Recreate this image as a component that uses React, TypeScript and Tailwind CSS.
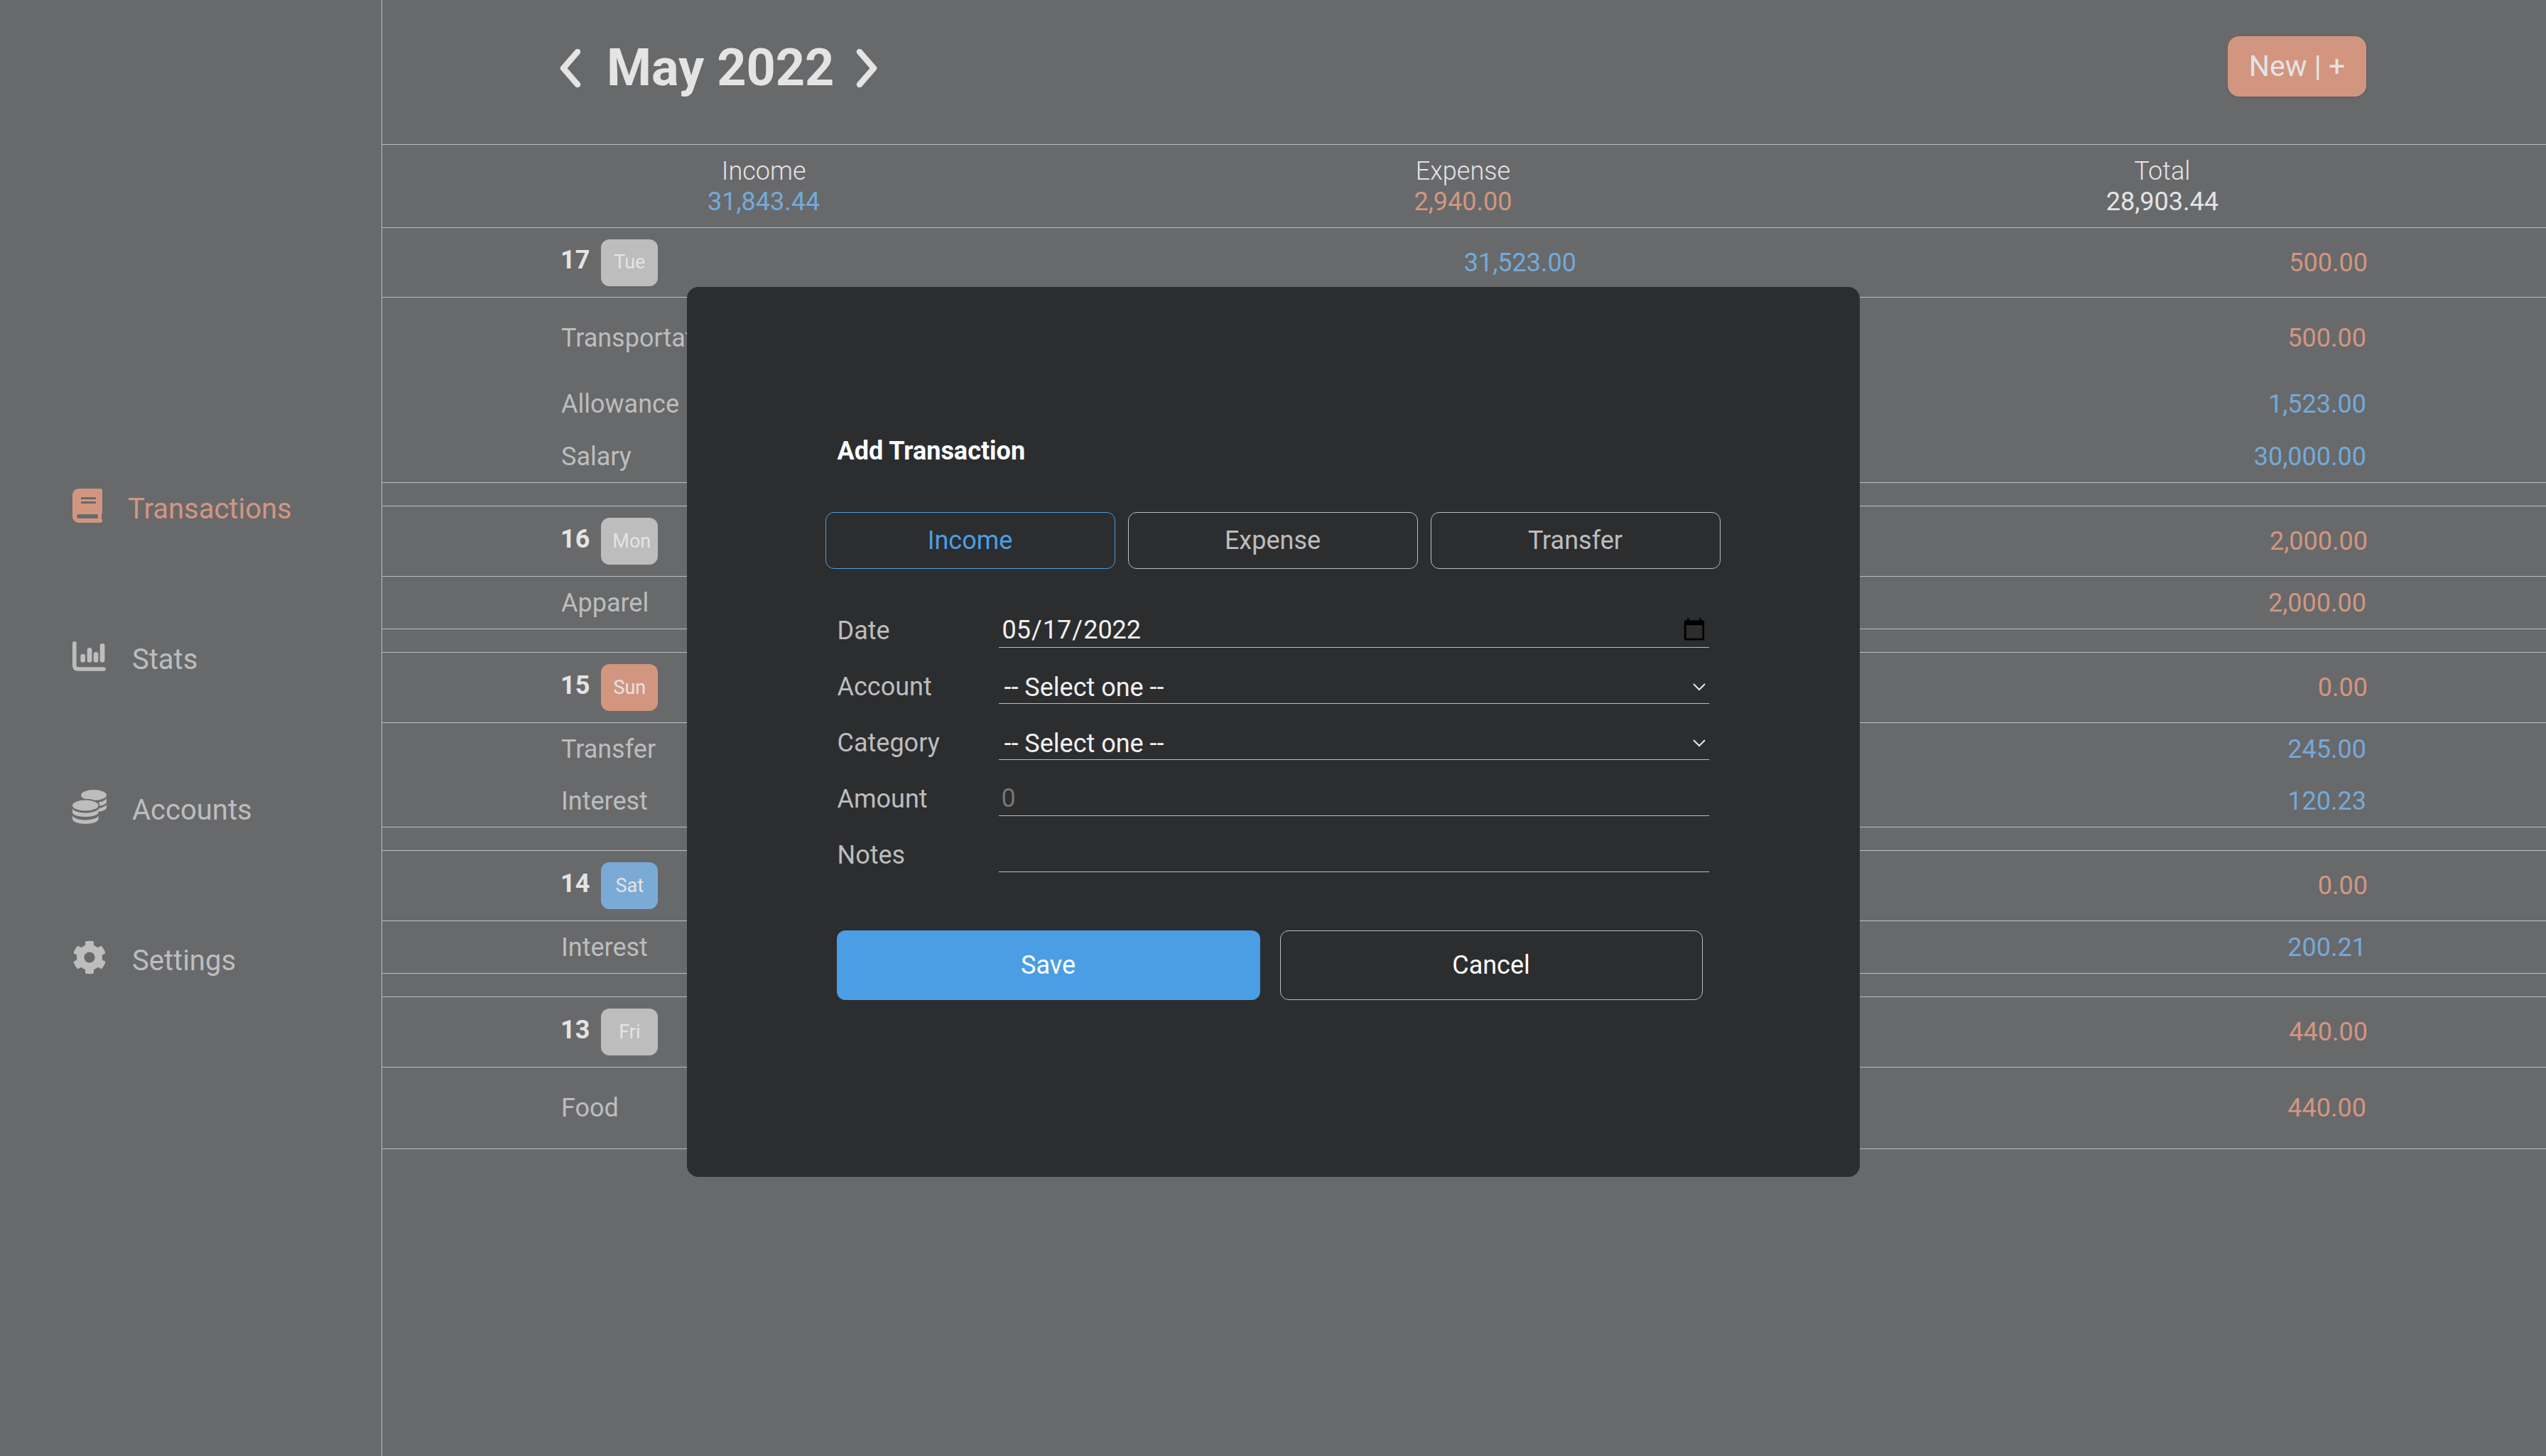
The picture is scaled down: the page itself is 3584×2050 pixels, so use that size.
import React from 'react';
import { FaBook, FaCog } from 'react-icons/fa';

const BLUE = 'text-[#74aad9]';
const RED = 'text-[#d29680]';

type Item = { name: string; amount: string; income?: boolean; height: string };
type Day = {
  date: number;
  weekday: string;
  badge: string;
  income?: string;
  expense: string;
  items: Item[];
};

const DAYS: Day[] = [
  {
    date: 17,
    weekday: 'Tue',
    badge: 'bg-[#bdbdbd]',
    income: '31,523.00',
    expense: '500.00',
    items: [
      { name: 'Transportation', amount: '500.00', height: 'h-[113px]' },
      { name: 'Allowance', amount: '1,523.00', income: true, height: 'h-[74px]' },
      { name: 'Salary', amount: '30,000.00', income: true, height: 'h-[73px]' },
    ],
  },
  {
    date: 16,
    weekday: 'Mon',
    badge: 'bg-[#bdbdbd]',
    expense: '2,000.00',
    items: [{ name: 'Apparel', amount: '2,000.00', height: 'h-[73px]' }],
  },
  {
    date: 15,
    weekday: 'Sun',
    badge: 'bg-[#d29680]',
    expense: '0.00',
    items: [
      { name: 'Transfer', amount: '245.00', income: true, height: 'h-[74px]' },
      { name: 'Interest', amount: '120.23', income: true, height: 'h-[72px]' },
    ],
  },
  {
    date: 14,
    weekday: 'Sat',
    badge: 'bg-[#7caad6]',
    expense: '0.00',
    items: [{ name: 'Interest', amount: '200.21', income: true, height: 'h-[73px]' }],
  },
  {
    date: 13,
    weekday: 'Fri',
    badge: 'bg-[#bdbdbd]',
    expense: '440.00',
    items: [{ name: 'Food', amount: '440.00', height: 'h-[114px]' }],
  },
];

function StatsIcon() {
  return (
    <svg width="48" height="42" viewBox="0 0 48 42" fill="#bdbdbd">
      <path d="M2.8 2.8V34q0 5 5 5H44" fill="none" stroke="#bdbdbd" strokeWidth="5.6" strokeLinecap="round" />
      <rect x="11.3" y="17.7" width="6.7" height="12" rx="3.3" />
      <rect x="20.7" y="9" width="6.7" height="20.7" rx="3.3" />
      <rect x="29.7" y="15" width="6.7" height="14.7" rx="3.3" />
      <rect x="38.7" y="3" width="6.7" height="26.7" rx="3.3" />
    </svg>
  );
}

function CoinsIcon() {
  return (
    <svg width="48" height="48" viewBox="0 0 48 48" fill="#bdbdbd">
      <ellipse cx="30" cy="7.5" rx="18" ry="7.5" />
      <path d="M37 17.5c5-.8 9.5-2.6 11-5.5v5c0 2.8-5 5-11 6z" />
      <path d="M37 26c5-.8 9.5-2.6 11-5.5V25c0 2.8-5 5-11 6z" />
      <ellipse cx="18.3" cy="22" rx="18.3" ry="7.6" stroke="#68696b" strokeWidth="3.4" />
      <ellipse cx="18.3" cy="22" rx="18.3" ry="7.6" />
      <path d="M0 26.5c1.8 3.6 9 6 18.3 6s16.5-2.4 18.3-6V32c0 3.3-8 6-18.3 6S0 35.3 0 32z" />
      <path d="M0 36.5c1.8 3.6 9 6 18.3 6s16.5-2.4 18.3-6V41c0 3.8-8 7-18.3 7S0 44.8 0 41z" />
    </svg>
  );
}

function SelectArrow() {
  return (
    <svg
      className="absolute right-[5px] bottom-[17px] pointer-events-none"
      width="18"
      height="11"
      viewBox="0 0 18 11"
      fill="none"
      stroke="#e8e8e8"
      strokeWidth="2"
    >
      <path d="M1 1l8 8 8-8" />
    </svg>
  );
}

function Chevron({ d, className }: { d: string; className?: string }) {
  return (
    <svg className={className} width="32" height="54" viewBox="0 0 32 54" fill="none" stroke="#e4e4e4" strokeWidth="8.5" strokeLinecap="round" strokeLinejoin="round">
      <path d={d} />
    </svg>
  );
}

function FormRow({ label, children }: { label: string; children: React.ReactNode }) {
  return (
    <div className="flex items-end h-[79px]">
      <span className="w-[228px] pl-[1px] leading-[48px] text-[#bdbdbd]">{label}</span>
      <div className="relative flex-1 h-[48px] border-b border-[#bdbdbd]">{children}</div>
    </div>
  );
}

function DayBlock({ day, first }: { day: Day; first: boolean }) {
  return (
    <div className={first ? 'border-b border-[#bdbdbd]' : 'mt-[32px] border-y border-[#bdbdbd]'}>
      <div className={`grid grid-cols-[1430px_1fr] items-center pl-[251px] pr-[251px] border-b border-[#bdbdbd] ${first ? 'h-[98px]' : 'h-[99px]'}`}>
        <div className="flex items-center justify-between">
          <div className="flex items-center gap-[16px]">
            <span className="font-bold text-[#e4e4e4] pb-[7px]">{day.date}</span>
            <span className={`w-20 h-[66px] px-4 rounded-xl flex items-center justify-center whitespace-nowrap text-[27px] text-[#e4e4e4] ${day.badge}`}>
              <span className="w-full text-center">{day.weekday}</span>
            </span>
          </div>
          {day.income && <span className={BLUE}>{day.income}</span>}
        </div>
        <span className={`text-right ${RED}`}>{day.expense}</span>
      </div>
      {day.items.map((item) => (
        <div key={item.name} className={`flex items-center justify-between pl-[252px] pr-[253px] ${item.height}`}>
          <span className="text-[#bdbdbd]">{item.name}</span>
          <span className={item.income ? BLUE : RED}>{item.amount}</span>
        </div>
      ))}
    </div>
  );
}

export default function App() {
  return (
    <div className="relative flex min-h-screen overflow-hidden bg-[#68696b] font-[Roboto,sans-serif] text-[36px]">
      {/* Sidebar */}
      <nav className="w-[538px] shrink-0 border-r border-[#bdbdbd] pl-[102px] pt-[688px] flex flex-col gap-[164px] text-[40px] text-[#bdbdbd]">
        <a className="flex items-center gap-9 h-12 text-[#d29680]">
          <FaBook className="w-[42px] h-12" />
          <span className="pt-[9px]">Transactions</span>
        </a>
        <a className="flex items-center gap-9 h-12">
          <StatsIcon />
          <span className="pt-[9px]">Stats</span>
        </a>
        <a className="flex items-center gap-9 h-12">
          <CoinsIcon />
          <span className="pt-[9px]">Accounts</span>
        </a>
        <a className="flex items-center gap-9 h-12">
          <FaCog size={48} />
          <span className="pt-[9px]">Settings</span>
        </a>
      </nav>

      {/* Main */}
      <main className="flex-1">
        <header className="h-[204px] border-b border-[#bdbdbd] flex items-center justify-between pl-[249px] pr-[253px]">
          <div className="flex items-center gap-[35px] pb-[12px]">
            <Chevron d="M26 4L6 27l20 23" />
            <h1 className="text-[72px] font-bold text-[#e4e4e4] leading-none">May 2022</h1>
            <Chevron d="M6 4l20 23L6 50" className="-ml-[5px]" />
          </div>
          <button className="h-[85px] w-[195px] mb-[16px] rounded-2xl bg-[#d29680] text-[41px] text-[#e4e4e4] shadow-sm">
            New | +
          </button>
        </header>

        <div className="h-[117px] border-b border-[#bdbdbd] grid grid-cols-3 items-center pl-[45px] pr-[48px] pt-[1px] text-center leading-[43px]">
          <div>
            <div className="font-light text-[#e4e4e4]">Income</div>
            <div className={BLUE}>31,843.44</div>
          </div>
          <div>
            <div className="font-light text-[#e4e4e4]">Expense</div>
            <div className={RED}>2,940.00</div>
          </div>
          <div>
            <div className="font-light text-[#e4e4e4]">Total</div>
            <div className="text-[#e4e4e4]">28,903.44</div>
          </div>
        </div>

        {DAYS.map((day, i) => (
          <DayBlock key={day.date} day={day} first={i === 0} />
        ))}
      </main>

      {/* Add transaction modal */}
      <div className="absolute inset-0 flex justify-center items-start pt-[404px]">
        <div className="w-[1651px] h-[1253px] rounded-2xl bg-[#2c2d2f] pl-[196px] pt-[210px]">
          <h2 className="pl-[16px] font-bold text-white leading-[42px]">Add Transaction</h2>

          <div className="grid grid-cols-3 gap-[18px] w-[1260px] -ml-[1px] mt-[65px]">
            <button className="h-[80px] rounded-xl border border-[#4a9ee5] text-[#4a9ee5]">Income</button>
            <button className="h-[80px] rounded-xl border border-[#bdbdbd] text-[#bdbdbd]">Expense</button>
            <button className="h-[80px] rounded-xl border border-[#bdbdbd] text-[#bdbdbd]">Transfer</button>
          </div>

          <div className="ml-[15px] w-[1228px] mt-[32px]">
            <FormRow label="Date">
              <input type="date" defaultValue="2022-05-17" className="block w-full h-[45px] bg-transparent pl-1 pr-[1px] text-[#f0f0f0] outline-none" />
            </FormRow>
            <FormRow label="Account">
              <select className="block w-full h-full -translate-y-[2px] appearance-none bg-transparent pl-[8px] text-[#f0f0f0] outline-none">
                <option>-- Select one --</option>
              </select>
              <SelectArrow />
            </FormRow>
            <FormRow label="Category">
              <select className="block w-full h-full -translate-y-[2px] appearance-none bg-transparent pl-[8px] text-[#f0f0f0] outline-none">
                <option>-- Select one --</option>
              </select>
              <SelectArrow />
            </FormRow>
            <FormRow label="Amount">
              <input placeholder="0" className="block w-full h-[45px] bg-transparent pl-1 text-[#f0f0f0] placeholder:text-[#757575] outline-none" />
            </FormRow>
            <FormRow label="Notes">
              <input className="block w-full h-full bg-transparent pl-1 text-[#f0f0f0] outline-none" />
            </FormRow>
          </div>

          <div className="ml-[15px] mt-[82px] flex gap-[28px]">
            <button className="w-[596px] h-[98px] rounded-xl bg-[#4b9ee3] text-white">Save</button>
            <button className="w-[595px] h-[98px] rounded-xl border border-[#bdbdbd] text-white">Cancel</button>
          </div>
        </div>
      </div>
    </div>
  );
}
